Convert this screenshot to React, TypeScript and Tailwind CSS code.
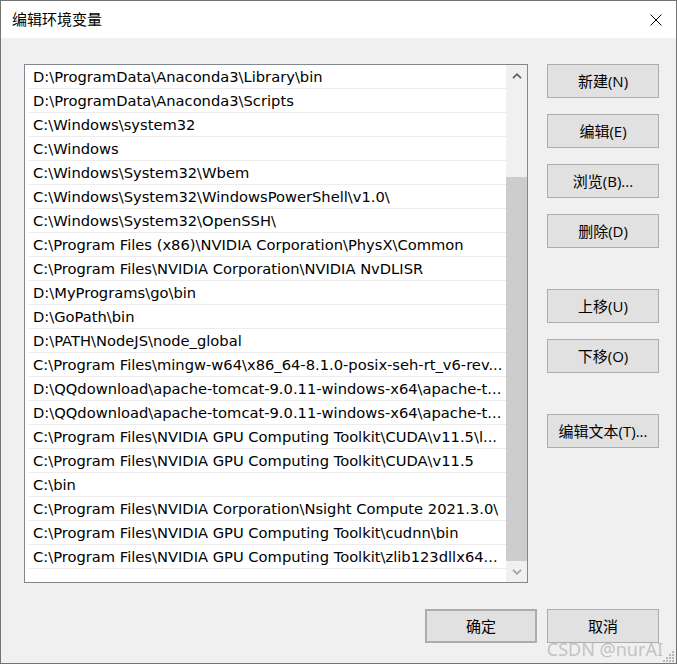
import React from "react";

const paths = [
  String.raw`D:\ProgramData\Anaconda3\Library\bin`,
  String.raw`D:\ProgramData\Anaconda3\Scripts`,
  String.raw`C:\Windows\system32`,
  String.raw`C:\Windows`,
  String.raw`C:\Windows\System32\Wbem`,
  String.raw`C:\Windows\System32\WindowsPowerShell\v1.0\ `.trim(),
  String.raw`C:\Windows\System32\OpenSSH\ `.trim(),
  String.raw`C:\Program Files (x86)\NVIDIA Corporation\PhysX\Common`,
  String.raw`C:\Program Files\NVIDIA Corporation\NVIDIA NvDLISR`,
  String.raw`D:\MyPrograms\go\bin`,
  String.raw`D:\GoPath\bin`,
  String.raw`D:\PATH\NodeJS\node_global`,
  String.raw`C:\Program Files\mingw-w64\x86_64-8.1.0-posix-seh-rt_v6-rev...`,
  String.raw`D:\QQdownload\apache-tomcat-9.0.11-windows-x64\apache-t...`,
  String.raw`D:\QQdownload\apache-tomcat-9.0.11-windows-x64\apache-t...`,
  String.raw`C:\Program Files\NVIDIA GPU Computing Toolkit\CUDA\v11.5\l...`,
  String.raw`C:\Program Files\NVIDIA GPU Computing Toolkit\CUDA\v11.5`,
  String.raw`C:\bin`,
  String.raw`C:\Program Files\NVIDIA Corporation\Nsight Compute 2021.3.0\ `.trim(),
  String.raw`C:\Program Files\NVIDIA GPU Computing Toolkit\cudnn\bin`,
  String.raw`C:\Program Files\NVIDIA GPU Computing Toolkit\zlib123dllx64...`,
];

function Btn({ children, className = "" }: { children: React.ReactNode; className?: string }) {
  return (
    <div
      className={`flex h-[34px] w-[112px] items-center justify-center border border-[#adadad] bg-[#e1e1e1] text-[15px] text-black ${className}`}
    >
      {children}
    </div>
  );
}

function Chevron({ up, color }: { up: boolean; color: string }) {
  return (
    <svg width="10" height="6" viewBox="0 0 10 6">
      <path
        d={up ? "M1 5.2 L5 1.2 L9 5.2" : "M1 0.8 L5 4.8 L9 0.8"}
        fill="none"
        stroke={color}
        strokeWidth="1.7"
      />
    </svg>
  );
}

export default function App() {
  return (
    <div className="relative flex h-[664px] w-[677px] flex-col border border-[#737373] bg-[#f0f0f0] font-['Open_Sans','Noto_Sans_CJK_SC',sans-serif] text-black">
      {/* Title bar */}
      <div className="flex h-[37px] items-center justify-between bg-white pl-[11px] pr-[14px]">
        <span className="font-['Noto_Sans_CJK_SC',sans-serif] text-[15px]">编辑环境变量</span>
        <svg width="12" height="12" viewBox="0 0 12 12">
          <path d="M0.5 0.5 L11.5 11.5 M11.5 0.5 L0.5 11.5" stroke="#000" strokeWidth="1" />
        </svg>
      </div>

      {/* Body */}
      <div className="flex pl-[23px] pr-[17px] pt-[26px]">
        {/* List */}
        <div className="flex h-[519px] w-[504px] border border-[#828790] bg-white">
          <div className="w-[481px] pl-[4px] font-['DejaVu_Sans',sans-serif]">
            {paths.map((p, i) => (
              <div
                key={i}
                className="flex h-[24px] items-center overflow-hidden whitespace-nowrap border-b border-[#ececec] pl-[4px] pt-[2px] text-[14.7px] leading-none"
              >
                {p}
              </div>
            ))}
          </div>
          <div className="flex w-[21px] flex-col bg-[#f0f0f0]">
            <div className="flex h-[21px] items-center justify-center">
              <Chevron up color="#606060" />
            </div>
            <div className="flex flex-1 flex-col pt-[91px]">
              <div className="flex-1 bg-[#cdcdcd]" />
            </div>
            <div className="flex h-[21px] items-center justify-center">
              <Chevron up={false} color="#a0a0a0" />
            </div>
          </div>
        </div>

        {/* Side buttons */}
        <div className="ml-[19px] flex flex-col">
          <Btn>新建(N)</Btn>
          <Btn className="mt-[16px]">编辑(E)</Btn>
          <Btn className="mt-[16px]">浏览(B)...</Btn>
          <Btn className="mt-[16px]">删除(D)</Btn>
          <Btn className="mt-[41px]">上移(U)</Btn>
          <Btn className="mt-[16px]">下移(O)</Btn>
          <Btn className="mt-[41px]">编辑文本(T)...</Btn>
        </div>
      </div>

      {/* Footer */}
      <div className="mt-[26px] flex justify-end gap-[10px] pr-[17px]">
        <Btn className="border-2 border-[#0078d7]">确定</Btn>
        <Btn>取消</Btn>
      </div>

      {/* Watermark */}
      <div className="absolute bottom-[3px] right-[13px] font-['Noto_Sans',sans-serif] text-[18px] leading-none pb-[2px] text-[#bdbdbd]/90">
        CSDN @nurAI
      </div>

      {/* Resize grip */}
      <svg className="absolute bottom-[1px] right-[1px]" width="12" height="12" viewBox="0 0 12 12">
        <g fill="#b8b8b8">
          <rect x="9" y="1" width="2" height="2" />
          <rect x="6" y="4" width="2" height="2" />
          <rect x="9" y="4" width="2" height="2" />
          <rect x="3" y="7" width="2" height="2" />
          <rect x="6" y="7" width="2" height="2" />
          <rect x="9" y="7" width="2" height="2" />
          <rect x="0" y="10" width="2" height="2" />
          <rect x="3" y="10" width="2" height="2" />
          <rect x="6" y="10" width="2" height="2" />
          <rect x="9" y="10" width="2" height="2" />
        </g>
      </svg>
    </div>
  );
}
